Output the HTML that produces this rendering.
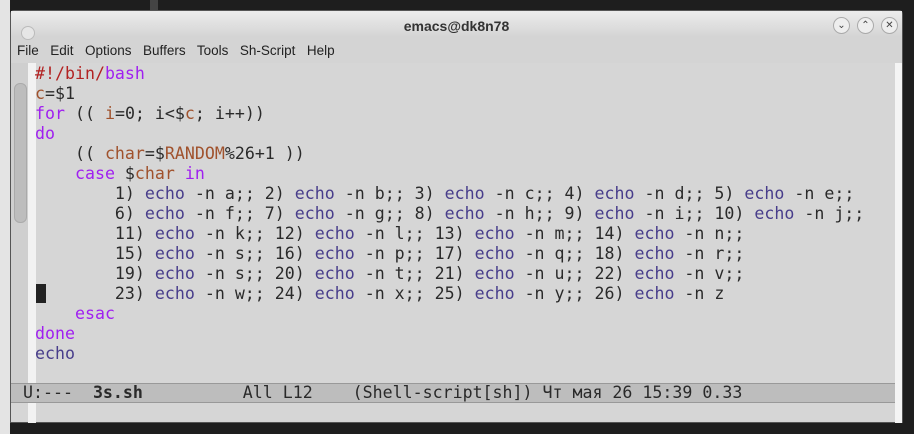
<!DOCTYPE html><html><head><meta charset="utf-8"><style>
body{margin:0;width:914px;height:434px;background:#1e1e1e;position:relative;overflow:hidden;font-family:"Liberation Sans",sans-serif}
.abs{position:absolute}
.win{left:10px;top:10px;width:893px;height:413px;background:#d6d6d6;border:1px solid #555;box-sizing:border-box;border-radius:4px 4px 0 0}
.title{left:0;top:0;width:891px;height:52px;background:linear-gradient(#ececec,#d4d4d4 50%)}
.code{font-family:"DejaVu Sans Mono",monospace;font-size:16.6px;line-height:20px;white-space:pre;color:#2a2a2a}
.k{color:#a020f0}.v{color:#a0522d}.b{color:#483d8b}.c{color:#b22222}
.btn{width:15px;height:15px;border-radius:50%;border:1px solid #aaa;background:#eee;top:6px;font-size:10px;text-align:center;line-height:15px;color:#444}
</style></head><body>
<div class="abs" style="left:0;top:0;width:10px;height:434px;background:#e4e4e4"></div>
<div class="abs" style="left:150px;top:0;width:8px;height:10px;background:#444"></div>
<div class="abs win">
 <div class="abs title"></div>
 <div class="abs" style="left:10px;top:15px;width:12px;height:12px;border-radius:50%;border:1px solid #bbb;background:#e6e6e6"></div>
 <div class="abs" style="left:0;width:891px;top:7px;text-align:center;font-weight:bold;font-size:14px;color:#333">emacs@dk8n78</div>
 <div class="abs btn" style="left:822px">&#8964;</div>
 <div class="abs btn" style="left:846px">&#8963;</div>
 <div class="abs btn" style="left:870px">✕</div>
 <div class="abs" style="left:6px;top:32px;font-size:13.5px;color:#222;word-spacing:2px">File&nbsp; Edit&nbsp; Options&nbsp; Buffers&nbsp; Tools&nbsp; Sh-Script&nbsp; Help</div>
 <div class="abs" style="left:0;top:52px;width:17px;height:321px;background:#cfcfcf"></div>
 <div class="abs" style="left:3px;top:72px;width:11px;height:138px;border-radius:6px;background:#bdbdbd;border:1px solid #aaa"></div>
 <div class="abs" style="left:17px;top:52px;width:8px;height:360px;background:#f2f2f2"></div>
 <div class="abs" style="left:884px;top:52px;width:7px;height:360px;background:#f4f4f4"></div>
 <div class="abs" style="left:25px;top:273px;width:10px;height:19px;background:#222"></div>
 <div class="abs" style="left:0;top:372px;width:884px;height:20px;background:#bdbdbd;border-top:1px solid #999;border-bottom:1px solid #999;box-sizing:border-box"></div>
 <div class="abs code" style="left:12px;top:372px;line-height:20px"><span>U:---  <b>3s.sh</b>          All L12    (Shell-script[sh]) Чт мая 26 15:39 0.33</span></div>
</div>
<div class="abs code" style="left:35px;top:64px"><span class="c">#!/bin/</span><span class="k">bash</span>
<span class="v">c</span>=$1
<span class="k">for</span> (( <span class="v">i</span>=0; i&lt;$<span class="v">c</span>; i++))
<span class="k">do</span>
    (( <span class="v">char</span>=$<span class="v">RANDOM</span>%26+1 ))
    <span class="k">case</span> $<span class="v">char</span> <span class="k">in</span>
        1) <span class="b">echo</span> -n a;; 2) <span class="b">echo</span> -n b;; 3) <span class="b">echo</span> -n c;; 4) <span class="b">echo</span> -n d;; 5) <span class="b">echo</span> -n e;;
        6) <span class="b">echo</span> -n f;; 7) <span class="b">echo</span> -n g;; 8) <span class="b">echo</span> -n h;; 9) <span class="b">echo</span> -n i;; 10) <span class="b">echo</span> -n j;;
        11) <span class="b">echo</span> -n k;; 12) <span class="b">echo</span> -n l;; 13) <span class="b">echo</span> -n m;; 14) <span class="b">echo</span> -n n;;
        15) <span class="b">echo</span> -n s;; 16) <span class="b">echo</span> -n p;; 17) <span class="b">echo</span> -n q;; 18) <span class="b">echo</span> -n r;;
        19) <span class="b">echo</span> -n s;; 20) <span class="b">echo</span> -n t;; 21) <span class="b">echo</span> -n u;; 22) <span class="b">echo</span> -n v;;
        23) <span class="b">echo</span> -n w;; 24) <span class="b">echo</span> -n x;; 25) <span class="b">echo</span> -n y;; 26) <span class="b">echo</span> -n z
    <span class="k">esac</span>
<span class="k">done</span>
<span class="b">echo</span></div>
</body></html>
